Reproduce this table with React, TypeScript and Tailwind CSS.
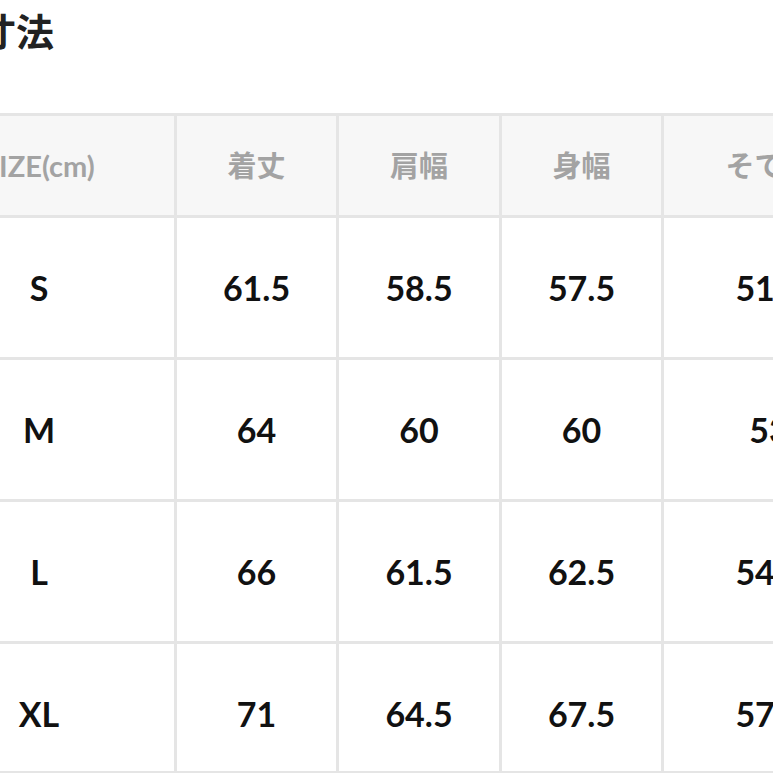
const headers = ["SIZE(cm)", "着丈", "肩幅", "身幅", "そで丈"];

const rows = [
  { size: "S", values: ["61.5", "58.5", "57.5", "51.5"] },
  { size: "M", values: ["64", "60", "60", "53"] },
  { size: "L", values: ["66", "61.5", "62.5", "54.5"] },
  { size: "XL", values: ["71", "64.5", "67.5", "57.5"] },
];

export default function App() {
  return (
    <div
      className="w-[773px] h-[773px] overflow-hidden bg-white"
      style={{ fontFamily: 'Lato, "Noto Sans CJK JP", sans-serif' }}
    >
      {/* Title */}
      <h2 className="ml-[-22px] pt-[12px] text-[38px] leading-none font-bold text-[#222]">
        寸法
      </h2>

      {/* Size table */}
      <div className="mt-[63px] ml-[-99px] w-max bg-[#e5e5e5] p-[3px]">
        <div className="grid grid-cols-[270px_159px_160px_159px_210px] gap-[3px]">
          {headers.map((h) => (
            <div
              key={h}
              className="h-[99px] bg-[#f7f7f7] flex items-center justify-center text-[29px] font-bold text-[#a3a3a3]"
            >
              {h}
            </div>
          ))}

          {rows.map((row, i) => {
            const h = i === rows.length - 1 ? "h-[127px] pt-[12px]" : "h-[139px]";
            return [row.size, ...row.values].map((v, j) => (
              <div
                key={`${row.size}-${j}`}
                className={`${h} bg-white flex items-center justify-center text-[34px] font-bold text-[#111]`}
              >
                {v}
              </div>
            ));
          })}
        </div>
      </div>
    </div>
  );
}
